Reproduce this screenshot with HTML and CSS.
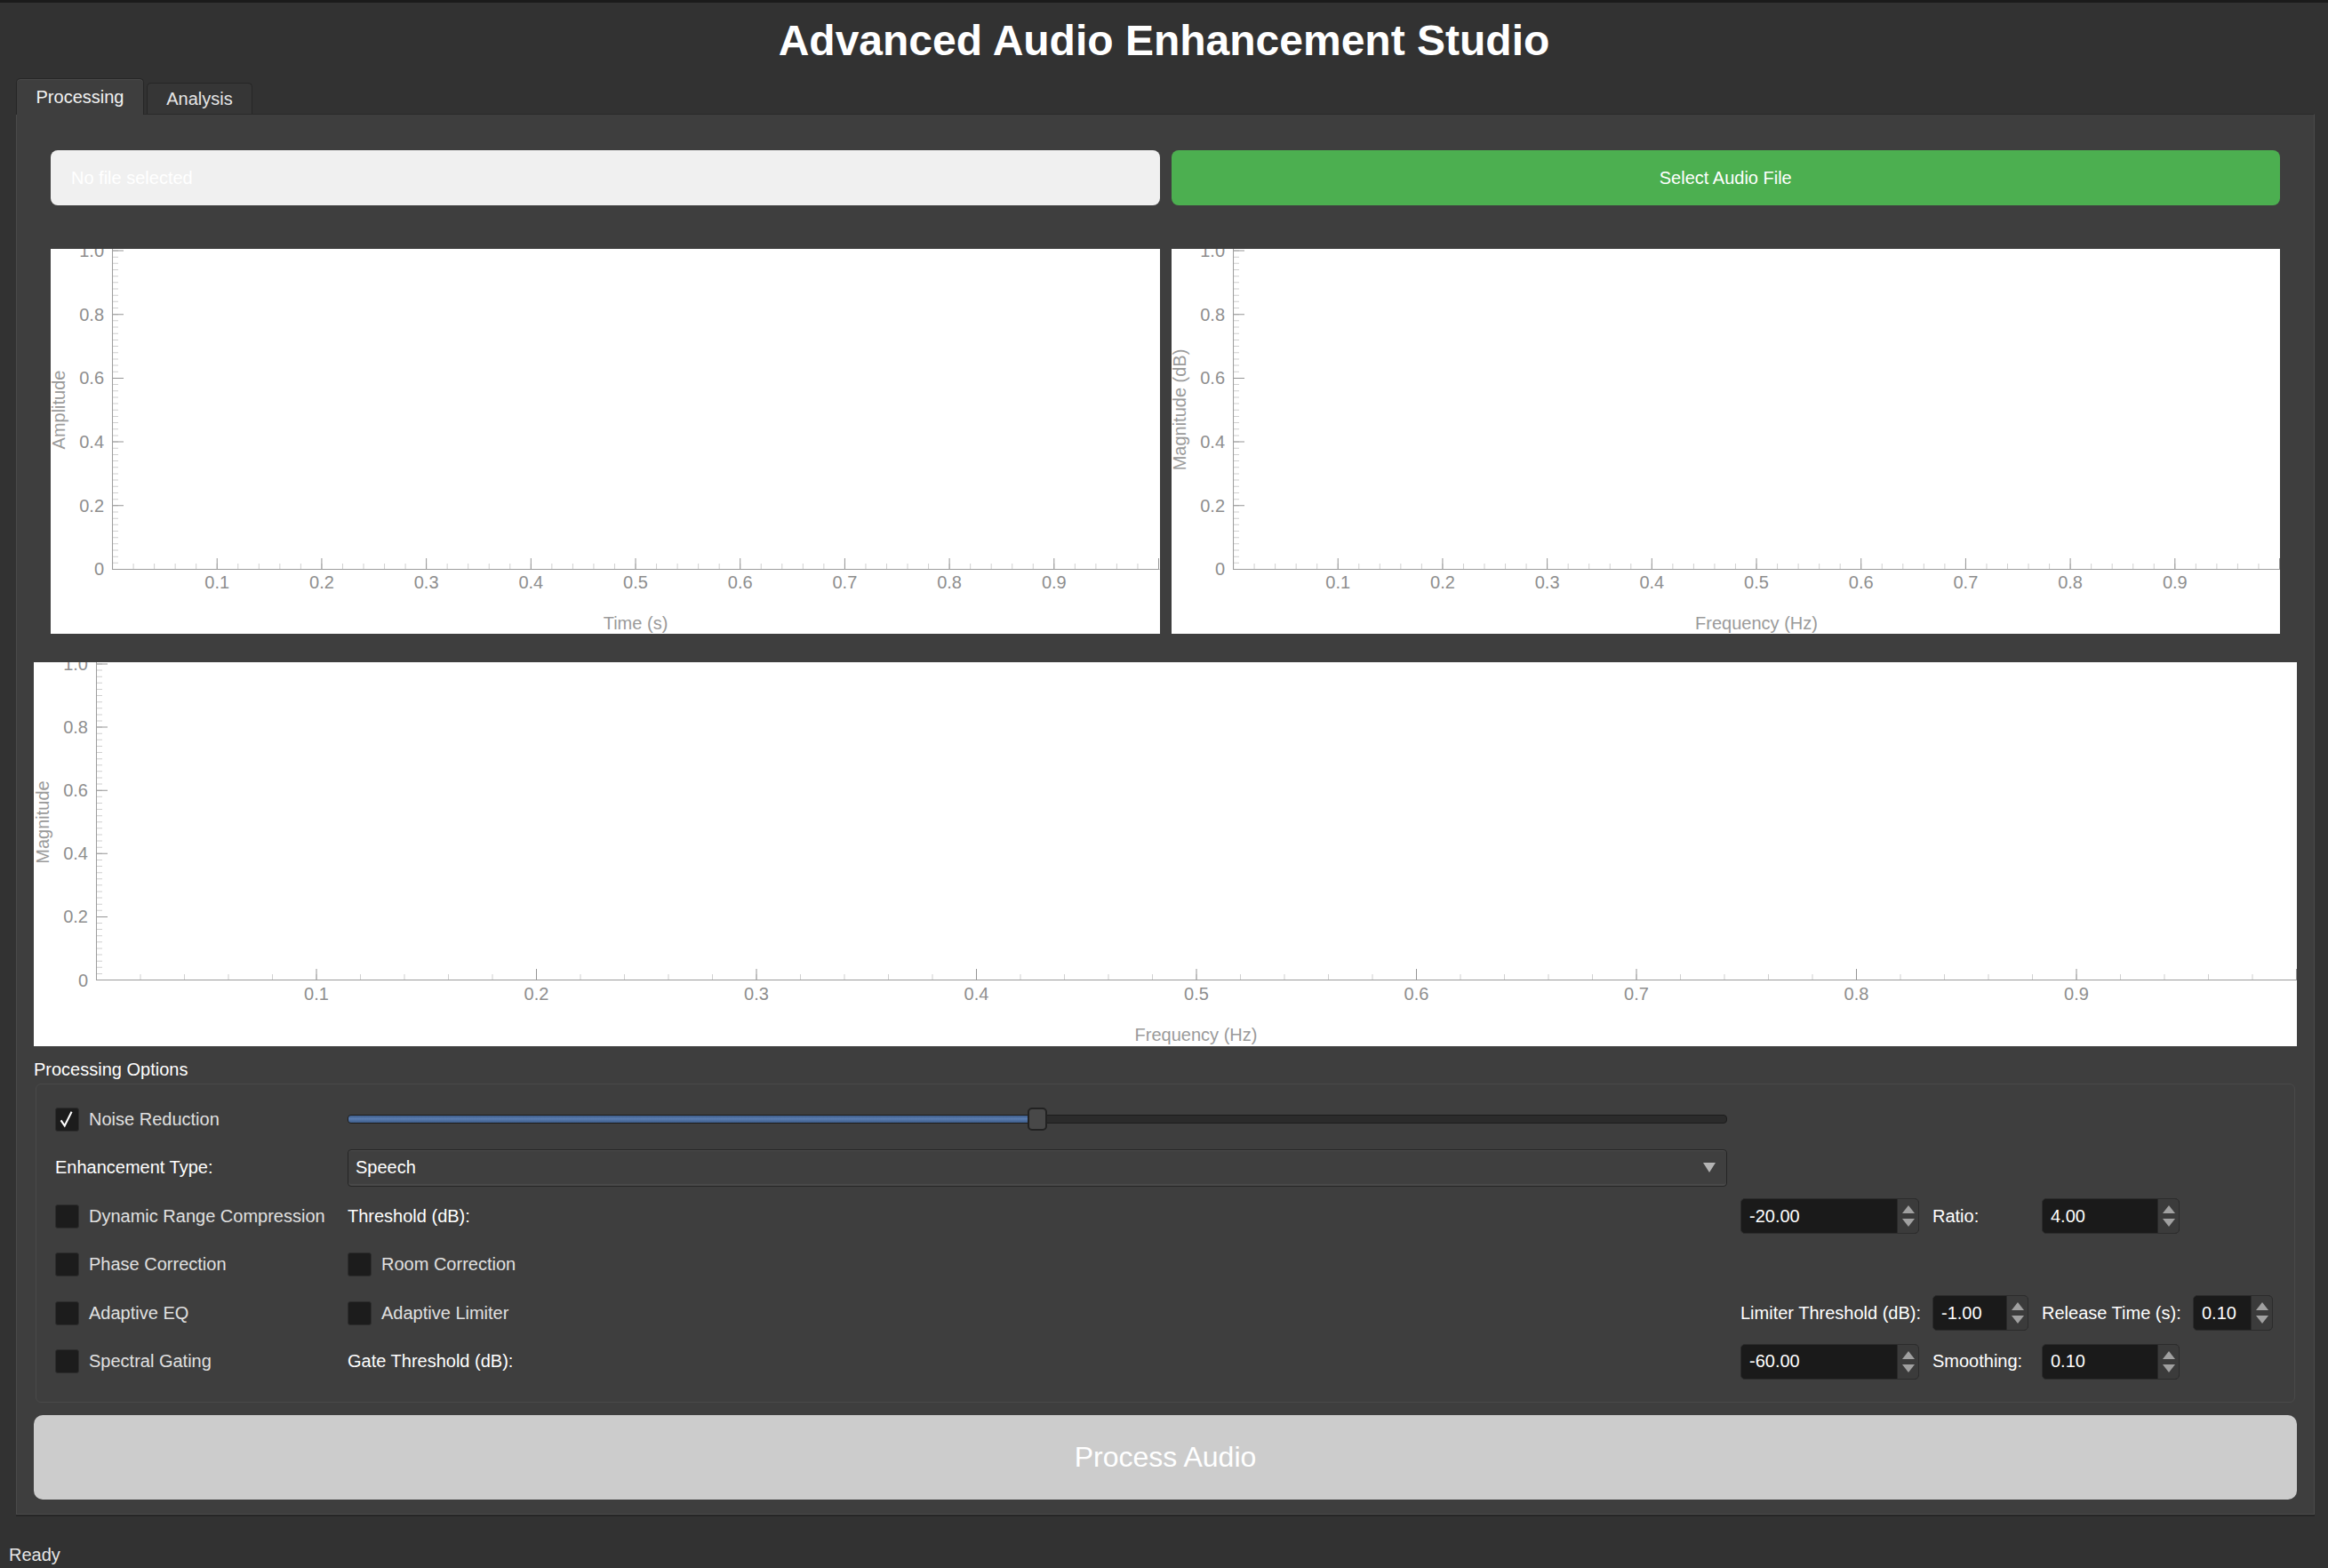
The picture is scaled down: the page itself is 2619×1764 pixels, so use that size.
FILE: index.html
```html
<!DOCTYPE html>
<html lang="en">
<head>
<meta charset="utf-8">
<title>Advanced Audio Enhancement Studio</title>
<link rel="stylesheet" href="styles.css">
</head>
<body>
<h1 class="title">Advanced Audio Enhancement Studio</h1>

<div class="tabs">
  <div class="tab tab-active">Processing</div>
  <div class="tab">Analysis</div>
</div>

<div class="pane">
  <div class="file-row">
    <div class="file-field">No file selected</div>
    <button class="btn-select">Select Audio File</button>
  </div>

  <div class="plot-row">
    <div class="plot">
      <svg class="chart" viewBox="0 0 1247 433" preserveAspectRatio="none">
        <line class="tk-minor-x" x1="69" y1="357" x2="1247" y2="357" stroke-dasharray="1 22.53"/>
        <line class="tk-major-x" x1="69" y1="354" x2="1247" y2="354" stroke-dasharray="1 116.65"/>
        <line class="tk-minor-y" x1="73" y1="361" x2="73" y2="0" stroke-dasharray="1 6.17"/>
        <line class="tk-major-y" x1="76" y1="361" x2="76" y2="0" stroke-dasharray="1 70.7"/>
        <line class="axis" x1="69.5" y1="0" x2="69.5" y2="361"/>
        <line class="axis" x1="69" y1="360.5" x2="1247" y2="360.5"/>
        <g class="tick-lbl" text-anchor="end">
          <text x="60" y="367.5">0</text>
          <text x="60" y="295.8">0.2</text>
          <text x="60" y="224.1">0.4</text>
          <text x="60" y="152.4">0.6</text>
          <text x="60" y="80.7">0.8</text>
          <text x="60" y="9">1.0</text>
        </g>
        <g class="tick-lbl" text-anchor="middle">
          <text x="187.15" y="382">0.1</text>
          <text x="304.8" y="382">0.2</text>
          <text x="422.45" y="382">0.3</text>
          <text x="540.1" y="382">0.4</text>
          <text x="657.75" y="382">0.5</text>
          <text x="775.4" y="382">0.6</text>
          <text x="893.05" y="382">0.7</text>
          <text x="1010.7" y="382">0.8</text>
          <text x="1128.35" y="382">0.9</text>
        </g>
        <text class="axis-title" x="657.75" y="428" text-anchor="middle">Time (s)</text>
        <text class="axis-title" transform="translate(10 181) rotate(-90)" x="0" y="6" text-anchor="middle">Amplitude</text>
      </svg>
    </div>
    <div class="plot">
      <svg class="chart" viewBox="0 0 1247 433" preserveAspectRatio="none">
        <line class="tk-minor-x" x1="69" y1="357" x2="1247" y2="357" stroke-dasharray="1 22.53"/>
        <line class="tk-major-x" x1="69" y1="354" x2="1247" y2="354" stroke-dasharray="1 116.65"/>
        <line class="tk-minor-y" x1="73" y1="361" x2="73" y2="0" stroke-dasharray="1 6.17"/>
        <line class="tk-major-y" x1="76" y1="361" x2="76" y2="0" stroke-dasharray="1 70.7"/>
        <line class="axis" x1="69.5" y1="0" x2="69.5" y2="361"/>
        <line class="axis" x1="69" y1="360.5" x2="1247" y2="360.5"/>
        <g class="tick-lbl" text-anchor="end">
          <text x="60" y="367.5">0</text>
          <text x="60" y="295.8">0.2</text>
          <text x="60" y="224.1">0.4</text>
          <text x="60" y="152.4">0.6</text>
          <text x="60" y="80.7">0.8</text>
          <text x="60" y="9">1.0</text>
        </g>
        <g class="tick-lbl" text-anchor="middle">
          <text x="187.15" y="382">0.1</text>
          <text x="304.8" y="382">0.2</text>
          <text x="422.45" y="382">0.3</text>
          <text x="540.1" y="382">0.4</text>
          <text x="657.75" y="382">0.5</text>
          <text x="775.4" y="382">0.6</text>
          <text x="893.05" y="382">0.7</text>
          <text x="1010.7" y="382">0.8</text>
          <text x="1128.35" y="382">0.9</text>
        </g>
        <text class="axis-title" x="657.75" y="428" text-anchor="middle">Frequency (Hz)</text>
        <text class="axis-title" transform="translate(10 181) rotate(-90)" x="0" y="6" text-anchor="middle">Magnitude (dB)</text>
      </svg>
    </div>
  </div>

  <div class="plot plot-wide">
    <svg class="chart" viewBox="0 0 2546 432" preserveAspectRatio="none">
      <line class="tk-minor-x" x1="70" y1="354" x2="2546" y2="354" stroke-dasharray="1 48.5"/>
      <line class="tk-major-x" x1="70" y1="351" x2="2546" y2="351" stroke-dasharray="1 246.5"/>
      <line class="tk-minor-y" x1="74" y1="358" x2="74" y2="0" stroke-dasharray="1 6.11"/>
      <line class="tk-major-y" x1="77" y1="358" x2="77" y2="0" stroke-dasharray="1 70.1"/>
      <line class="axis" x1="70.5" y1="0" x2="70.5" y2="358"/>
      <line class="axis" x1="70" y1="357.5" x2="2546" y2="357.5"/>
      <g class="tick-lbl" text-anchor="end">
        <text x="61" y="364.5">0</text>
        <text x="61" y="293.4">0.2</text>
        <text x="61" y="222.3">0.4</text>
        <text x="61" y="151.2">0.6</text>
        <text x="61" y="80.1">0.8</text>
        <text x="61" y="9">1.0</text>
      </g>
      <g class="tick-lbl" text-anchor="middle">
        <text x="318" y="380">0.1</text>
        <text x="565.5" y="380">0.2</text>
        <text x="813" y="380">0.3</text>
        <text x="1060.5" y="380">0.4</text>
        <text x="1308" y="380">0.5</text>
        <text x="1555.5" y="380">0.6</text>
        <text x="1803" y="380">0.7</text>
        <text x="2050.5" y="380">0.8</text>
        <text x="2298" y="380">0.9</text>
      </g>
      <text class="axis-title" x="1307.5" y="426" text-anchor="middle">Frequency (Hz)</text>
      <text class="axis-title" transform="translate(11 180) rotate(-90)" x="0" y="6" text-anchor="middle">Magnitude</text>
    </svg>
  </div>

  <div class="group-title">Processing Options</div>
  <div class="options">
    <!-- row 1 -->
    <label class="check c1"><span class="box box-on"><svg viewBox="0 0 27 27" width="25" height="25"><path d="M6 14.5 L10.5 21 L19 4" fill="none" stroke="#ffffff" stroke-width="2.2" stroke-linejoin="miter"/></svg></span>Noise Reduction</label>
    <div class="slider c2">
      <div class="groove"><div class="fill" style="width:50%"></div></div>
      <div class="handle" style="left:50%"></div>
    </div>

    <!-- row 2 -->
    <div class="lbl c1">Enhancement Type:</div>
    <div class="combo c2"><span>Speech</span><svg width="14" height="11" viewBox="0 0 14 11"><polygon points="0,0 14,0 7,11" fill="#b4b4b4"/></svg></div>

    <!-- row 3 -->
    <label class="check c1"><span class="box"></span>Dynamic Range Compression</label>
    <div class="lbl c2">Threshold (dB):</div>
    <div class="spin c3"><span class="spin-val">-20.00</span><span class="spin-btns"><svg width="16" height="30" viewBox="0 0 16 30"><polygon points="8,3 15,12 1,12" fill="#a0a0a0"/><polygon points="1,18 15,18 8,27" fill="#a0a0a0"/></svg></span></div>
    <div class="lbl c4">Ratio:</div>
    <div class="spin c5"><span class="spin-val">4.00</span><span class="spin-btns"><svg width="16" height="30" viewBox="0 0 16 30"><polygon points="8,3 15,12 1,12" fill="#a0a0a0"/><polygon points="1,18 15,18 8,27" fill="#a0a0a0"/></svg></span></div>

    <!-- row 4 -->
    <label class="check c1"><span class="box"></span>Phase Correction</label>
    <label class="check c2"><span class="box"></span>Room Correction</label>

    <!-- row 5 -->
    <label class="check c1"><span class="box"></span>Adaptive EQ</label>
    <label class="check c2"><span class="box"></span>Adaptive Limiter</label>
    <div class="lbl c3">Limiter Threshold (dB):</div>
    <div class="spin c4"><span class="spin-val">-1.00</span><span class="spin-btns"><svg width="16" height="30" viewBox="0 0 16 30"><polygon points="8,3 15,12 1,12" fill="#a0a0a0"/><polygon points="1,18 15,18 8,27" fill="#a0a0a0"/></svg></span></div>
    <div class="lbl c5">Release Time (s):</div>
    <div class="spin c6"><span class="spin-val">0.10</span><span class="spin-btns"><svg width="16" height="30" viewBox="0 0 16 30"><polygon points="8,3 15,12 1,12" fill="#a0a0a0"/><polygon points="1,18 15,18 8,27" fill="#a0a0a0"/></svg></span></div>

    <!-- row 6 -->
    <label class="check c1"><span class="box"></span>Spectral Gating</label>
    <div class="lbl c2">Gate Threshold (dB):</div>
    <div class="spin c3"><span class="spin-val">-60.00</span><span class="spin-btns"><svg width="16" height="30" viewBox="0 0 16 30"><polygon points="8,3 15,12 1,12" fill="#a0a0a0"/><polygon points="1,18 15,18 8,27" fill="#a0a0a0"/></svg></span></div>
    <div class="lbl c4">Smoothing:</div>
    <div class="spin c5"><span class="spin-val">0.10</span><span class="spin-btns"><svg width="16" height="30" viewBox="0 0 16 30"><polygon points="8,3 15,12 1,12" fill="#a0a0a0"/><polygon points="1,18 15,18 8,27" fill="#a0a0a0"/></svg></span></div>
  </div>

  <button class="btn-process">Process Audio</button>
</div>

<div class="status">Ready</div>
</body>
</html>
```

FILE: styles.css
```css
* {
  box-sizing: border-box;
}

html,
body {
  margin: 0;
  padding: 0;
}

body {
  width: 2619px;
  height: 1764px;
  overflow: hidden;
  background: #323232;
  border-top: 3px solid #1b1b1b;
  font-family: "Liberation Sans", Arial, Helvetica, sans-serif;
  color: #e8e8e8;
}

.title {
  margin: 0;
  height: 85px;
  display: flex;
  align-items: center;
  justify-content: center;
  font-size: 48px;
  font-weight: bold;
  color: #ffffff;
}

/* ---------- tabs ---------- */
.tabs {
  display: flex;
  align-items: flex-end;
  height: 40px;
  padding-left: 18px;
}

.tab {
  height: 35px;
  width: 119px;
  margin-left: 3px;
  display: flex;
  align-items: center;
  justify-content: center;
  font-size: 20px;
  color: #e6e6e6;
  background: #363636;
  border: 1px solid #262626;
  border-bottom: none;
  border-radius: 5px 5px 0 0;
}

.tab-active {
  position: relative;
  z-index: 1;
  height: 41px;
  width: 144px;
  margin-left: 0;
  margin-bottom: -1px;
  background: #3e3e3e;
  color: #f2f2f2;
  box-shadow: inset 0 1px 0 #4a4a4a;
}

/* ---------- pane ---------- */
.pane {
  margin: 0 15px 0 18px;
  background: #3e3e3e;
  border: 1px solid #4a4a4a;
  border-top-color: #2a2a2a;
  box-shadow: 0 2px 0 #262626;
  padding: 40px 19px 16px;
}

.file-row {
  display: grid;
  grid-template-columns: 1fr 1fr;
  gap: 13px;
  margin: 0 19px;
  height: 62px;
}

.file-field {
  display: flex;
  align-items: center;
  padding-left: 23px;
  background: #f0f0f0;
  border-radius: 8px;
  font-size: 20px;
  color: #ffffff;
}

.btn-select {
  padding: 0;
  border: none;
  border-radius: 8px;
  background: #4caf50;
  color: #ffffff;
  font-family: inherit;
  font-size: 20px;
}

/* ---------- plots ---------- */
.plot-row {
  display: grid;
  grid-template-columns: 1fr 1fr;
  gap: 13px;
  margin: 49px 19px 0;
}

.plot {
  height: 433px;
  background: #ffffff;
}

.plot-wide {
  height: 432px;
  margin-top: 32px;
}

.chart {
  display: block;
  width: 100%;
  height: 100%;
}

.axis {
  stroke: #9c9c9c;
  stroke-width: 1px;
}

.tk-minor-x,
.tk-minor-y {
  stroke: #d0d0d0;
  stroke-width: 6px;
}

.tk-major-x,
.tk-major-y {
  stroke: #959595;
  stroke-width: 12px;
}

.tick-lbl {
  font-family: "Liberation Sans", Arial, sans-serif;
  font-size: 20px;
  fill: #8e8e8e;
}

.axis-title {
  font-family: "Liberation Sans", Arial, sans-serif;
  font-size: 20px;
  fill: #9a9a9a;
}

/* ---------- processing options ---------- */
.group-title {
  margin: 14px 0 4px;
  font-size: 20px;
  line-height: 24px;
  color: #ffffff;
}

.options {
  margin: 0 2px;
  border: 1px solid #494949;
  border-radius: 6px;
  padding: 19px 24px 25px 21px;
  display: grid;
  grid-template-columns: 314px 1fr 201px 108px 155px 90px;
  grid-template-rows: repeat(6, 40px);
  row-gap: 14.6px;
  column-gap: 15px;
  align-items: center;
}

.c1 { grid-column: 1; }
.c2 { grid-column: 2; }
.c3 { grid-column: 3; }
.c4 { grid-column: 4; }
.c5 { grid-column: 5; }
.c6 { grid-column: 6; }

.check {
  display: flex;
  align-items: center;
  gap: 11px;
  white-space: nowrap;
  font-size: 20px;
  color: #e0e0e0;
}

.box {
  flex: none;
  width: 27px;
  height: 27px;
  display: flex;
  align-items: center;
  justify-content: center;
  background: #1c1c1c;
  border: 1px solid #2d2d2d;
  border-radius: 3px;
}

.lbl {
  font-size: 20px;
  color: #ffffff;
  white-space: nowrap;
}

.slider {
  position: relative;
  height: 26px;
  display: flex;
  align-items: center;
}

.groove {
  width: 100%;
  height: 10px;
  background: #2b2b2b;
  border: 1px solid #1d1d1d;
  border-radius: 4px;
  overflow: hidden;
}

.fill {
  height: 100%;
  background: linear-gradient(#3e5d8a, #5a7cb0 45%, #3e5d8a);
}

.handle {
  position: absolute;
  top: 0;
  width: 22px;
  height: 26px;
  margin-left: -11px;
  background: #484848;
  border: 2px solid #222222;
  border-radius: 5px;
}

.combo {
  height: 42px;
  display: flex;
  align-items: center;
  justify-content: space-between;
  padding: 0 12px 0 8px;
  background: #3f3f3f;
  border: 1px solid #252525;
  border-radius: 4px;
  box-shadow: inset 0 1px 0 #4c4c4c, inset 0 -2px 0 #4a4a4a;
  font-size: 20px;
  color: #ffffff;
}

.spin {
  height: 40px;
  display: flex;
  background: #1a1a1a;
  border: 1px solid #2c2c2c;
  border-radius: 5px;
  overflow: hidden;
}

.spin-val {
  flex: 1;
  display: flex;
  align-items: center;
  padding-left: 9px;
  font-size: 20px;
  color: #ffffff;
}

.spin-btns {
  width: 24px;
  display: flex;
  align-items: center;
  justify-content: center;
  background: #3b3b3b;
  border-left: 1px solid #2a2a2a;
}

/* ---------- process button ---------- */
.btn-process {
  display: block;
  width: 100%;
  height: 95px;
  margin-top: 14px;
  padding: 0;
  border: none;
  border-radius: 10px;
  background: #cccccc;
  color: #ffffff;
  font-family: inherit;
  font-size: 32px;
}

/* ---------- status bar ---------- */
.status {
  margin-top: 33px;
  padding-left: 10px;
  font-size: 20px;
  line-height: 24px;
  color: #e6e6e6;
}
```
